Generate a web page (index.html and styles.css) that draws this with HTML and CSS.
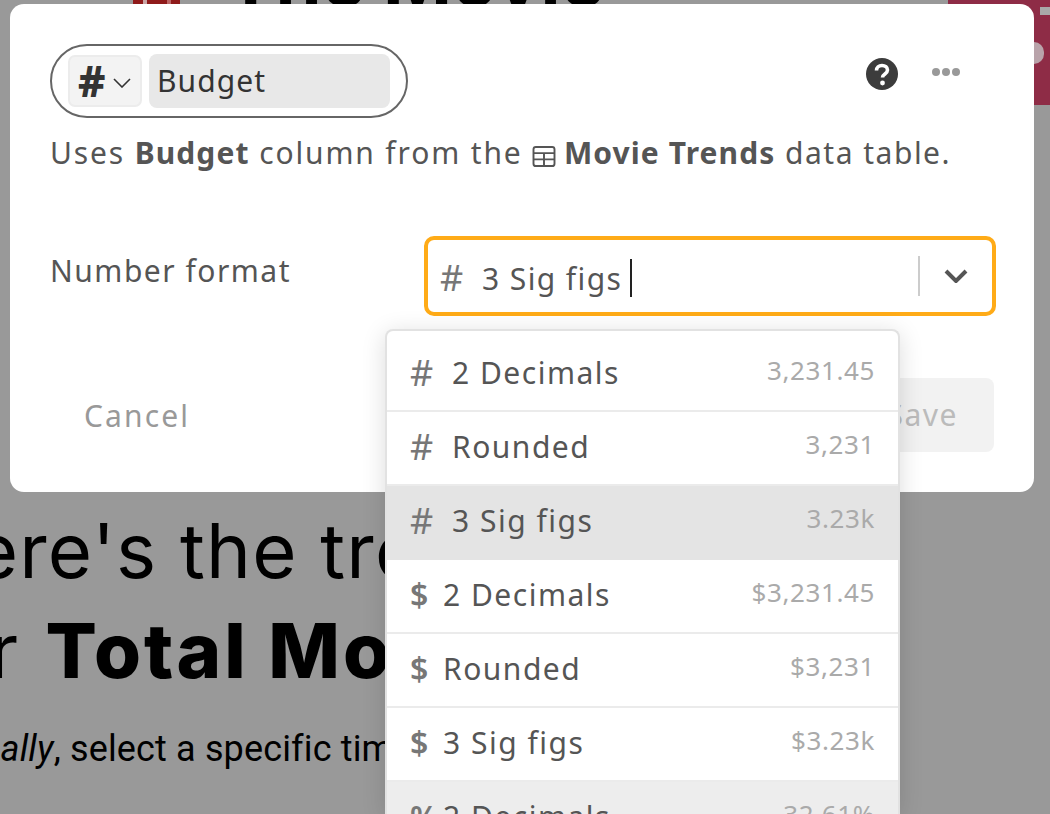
FILE: index.html
```html
<!DOCTYPE html>
<html lang="en">
<head>
<meta charset="utf-8">
<title>Number format</title>
<link rel="stylesheet" href="styles.css">
</head>
<body>
<div class="behind">
  <div class="poster"></div>
  <div class="page-title">The Movie</div>
  <div class="side-card"><span class="side-bar"></span><span class="side-heart"></span></div>
</div>
<main class="modal">
  <header class="modal-head">
    <div class="name-pill">
      <button class="type-btn"><span class="type-hash">#</span>
        <svg class="type-chev" viewBox="0 0 18 10" width="18" height="10"><path d="M1 1l8 8 8-8" fill="none" stroke="#333" stroke-width="1.6"/></svg>
      </button>
      <div class="name-input">Budget</div>
    </div>
    <div class="head-actions">
      <svg class="help" viewBox="0 0 32 32" width="32" height="32"><circle cx="16" cy="16" r="16" fill="#3c3c3c"/><path d="M10.500 12.500c0-3.200 2.400-5 5.500-5s5.500 1.800 5.500 4.600c0 4-5 3.600-5 7.400" fill="none" stroke="#fff" stroke-width="3.600"/><circle cx="16.500" cy="25" r="2.400" fill="#fff"/></svg>
      <svg class="dots" viewBox="0 0 28 8" width="28" height="8"><circle cx="4" cy="4" r="4" fill="#999"/><circle cx="14" cy="4" r="4" fill="#999"/><circle cx="24" cy="4" r="4" fill="#999"/></svg>
    </div>
  </header>
  <p class="desc">Uses <b>Budget</b> column from the <svg class="tbl" viewBox="0 0 24 22" width="24" height="21"><rect x="1" y="1" width="22" height="20" rx="2.500" fill="none" stroke="#555" stroke-width="2"/><path d="M1 7.500h22M1 14h22M12 7.500V21" fill="none" stroke="#555" stroke-width="2"/></svg> <b>Movie Trends</b> <span class="desc-tail">data table.</span></p>
  <div class="format-row">
    <label class="format-label">Number format</label>
    <div class="select">
      <span class="sym">#</span><span class="select-val">3 Sig figs</span><span class="caret"></span>
      <span class="select-sep"></span>
      <svg class="select-chev" viewBox="0 0 24 14" width="24" height="14"><path d="M2 2l10 10L22 2" fill="none" stroke="#555" stroke-width="4"/></svg>
    </div>
  </div>
  <footer class="modal-foot">
    <span class="cancel">Cancel</span>
    <span class="save">Save</span>
  </footer>
</main>
<section class="story">
  <div class="story-line story-a">Here's the trends</div>
  <div class="story-line story-bold"><span class="story-for">for </span>Total Movies</div>
  <div class="story-sub"><i>Finally</i>, select a specific time period</div>
</section>
<ul class="menu">
  <li class="opt"><span class="opt-name"><span class="sym">#</span>2 Decimals</span><span class="opt-ex">3,231.45</span></li>
  <li class="opt"><span class="opt-name"><span class="sym">#</span>Rounded</span><span class="opt-ex">3,231</span></li>
  <li class="opt opt-sel"><span class="opt-name"><span class="sym">#</span>3 Sig figs</span><span class="opt-ex">3.23k</span></li>
  <li class="opt"><span class="opt-name"><span class="sym sym-d">$</span>2 Decimals</span><span class="opt-ex">$3,231.45</span></li>
  <li class="opt"><span class="opt-name"><span class="sym sym-d">$</span>Rounded</span><span class="opt-ex">$3,231</span></li>
  <li class="opt"><span class="opt-name"><span class="sym sym-d">$</span>3 Sig figs</span><span class="opt-ex">$3.23k</span></li>
  <li class="opt opt-hover"><span class="opt-name"><span class="sym sym-d">%</span>2 Decimals</span><span class="opt-ex">32.61%</span></li>
</ul>
</body>
</html>
```
FILE: styles.css
```css
* { box-sizing: border-box; }
html, body { margin: 0; height: 814px; overflow: hidden; }
body {
  position: relative;
  background: #999;
  font-family: "Noto Sans", sans-serif;
  color: #555;
  font-size: 30px;
  letter-spacing: 1.5px;
}
.behind { position: absolute; inset: 0; overflow: hidden; }
.poster {
  position: absolute; left: 133px; top: 0; width: 47px; height: 5px;
  background: linear-gradient(90deg, #8f1a1a 0 10px, #c9a5a5 10px 14px, #8f1a1a 14px 34px, #b66 34px 38px, #8f1a1a 38px);
}
.page-title {
  position: absolute; left: 226px; top: -58px;
  font: 700 74px/74px "Inter", sans-serif; color: #000; letter-spacing: 0;
}
.side-card { position: absolute; left: 948px; top: 0; width: 102px; height: 105px; background: #8e2c46; }
.side-bar { position: absolute; right: 0; top: 7px; width: 10px; height: 8px; background: #a9a9a9; }
.side-heart { position: absolute; left: 86px; top: 42px; width: 10px; height: 22px; border-radius: 0 10px 10px 0; background: #b9a3aa; }

.modal {
  position: relative;
  margin: 4px 16px 0 10px;
  height: 488px;
  padding: 40px;
  background: #fff;
  border-radius: 14px;
}
.modal-head { display: flex; justify-content: space-between; align-items: flex-start; }
.name-pill {
  display: flex; align-items: center; gap: 7px;
  width: 358px; height: 74px; padding: 0 16px;
  border: 2px solid #666; border-radius: 37px;
}
.type-btn {
  display: flex; align-items: center; gap: 8px;
  flex: none;
  width: 74px; height: 52px; padding: 0 8px;
  background: #f3f3f3; border: 2px solid #ececec; border-radius: 7px;
}
.type-hash { font: 800 42px/1 "Noto Sans", sans-serif; color: #333; }
.type-chev { flex: none; margin-top: 4px; }
.name-input {
  flex: 1; height: 54px; padding-left: 8px;
  background: #e8e8e8; border-radius: 8px;
  line-height: 54px; color: #333; letter-spacing: 1.1px;
}
.head-actions { display: flex; gap: 34px; margin-right: 34px; padding-top: 14px; }
.help { display: block; }
.dots { display: block; margin-top: 10px; }

.desc { margin: 15px 0 0; line-height: 40px; white-space: nowrap; letter-spacing: 1.85px; }
.desc b { font-weight: 700; letter-spacing: 1.1px; }
.desc-tail { letter-spacing: 1.5px; }
.tbl { vertical-align: -3px; margin-right: -2px; }

.format-row { display: flex; justify-content: space-between; align-items: flex-start; margin-top: 63px; }
.format-label { line-height: 70px; }
.select {
  display: flex; align-items: center;
  width: 572px; height: 80px; margin-right: -2px; padding: 4px 24px 0 12px;
  border: 4px solid #ffab17; border-radius: 10px;
}
.sym { width: 26px; margin-right: 16px; color: #777; font-size: 36px; line-height: 1; letter-spacing: 0; }
.opt .sym { line-height: 70px; }
.sym-d { width: 18px; margin-right: 15px; font-size: 32px; font-weight: 600; }
.select-val { letter-spacing: 1.4px; }
.caret { width: 2px; height: 38px; margin-left: 8px; background: #222; }
.select-sep { width: 2px; height: 40px; margin-left: auto; margin-right: 24px; margin-top: -4px; background: #ccc; }
.select-chev { flex: none; margin-top: -4px; }

.modal-foot { display: flex; justify-content: space-between; align-items: center; margin-top: 62px; }
.cancel { margin-left: 34px; color: #999; letter-spacing: 2.1px; }
.save {
  width: 140px; height: 74px; padding-right: 36px;
  background: #f2f2f2; border-radius: 8px;
  line-height: 74px; text-align: right; color: #bbb;
}

.story { color: #000; font-family: "Inter", sans-serif; letter-spacing: 0; white-space: nowrap; }
.story-line { font-size: 76px; line-height: 100px; margin-top: 8px; letter-spacing: 1.2px; }
.story-a { margin-left: -84px; }
.story-bold { font-weight: 800; margin-top: 0; margin-left: -88px; letter-spacing: 3px; }
.story-for { font-weight: 400; }
.story-sub { font-family: "Roboto", sans-serif; font-size: 36px; line-height: 50px; margin-top: 24px; margin-left: -47px; letter-spacing: .15px; }

.menu {
  position: absolute; left: 385px; top: 329px;
  width: 515px; height: 485px; margin: 0; padding: 7px 0 0;
  list-style: none;
  overflow: hidden;
  background: #fff;
  border: 2px solid #e2e2e2; border-bottom: 0; border-radius: 8px 8px 0 0;
  box-shadow: 0 4px 24px rgba(0,0,0,.14);
}
.opt {
  display: flex; justify-content: space-between;
  height: 74px; padding: 0 23px;
  border-bottom: 2px solid #ebebeb;
  line-height: 70px;
}
.opt-name { display: flex; }
.opt-ex { margin-top: -3px; color: #aaa; font-size: 26px; letter-spacing: .6px; }
.opt-sel { background: #e4e4e4; border-bottom-color: #e4e4e4; }
.opt-hover { background: #ededed; border-bottom-color: #ededed; }
```
